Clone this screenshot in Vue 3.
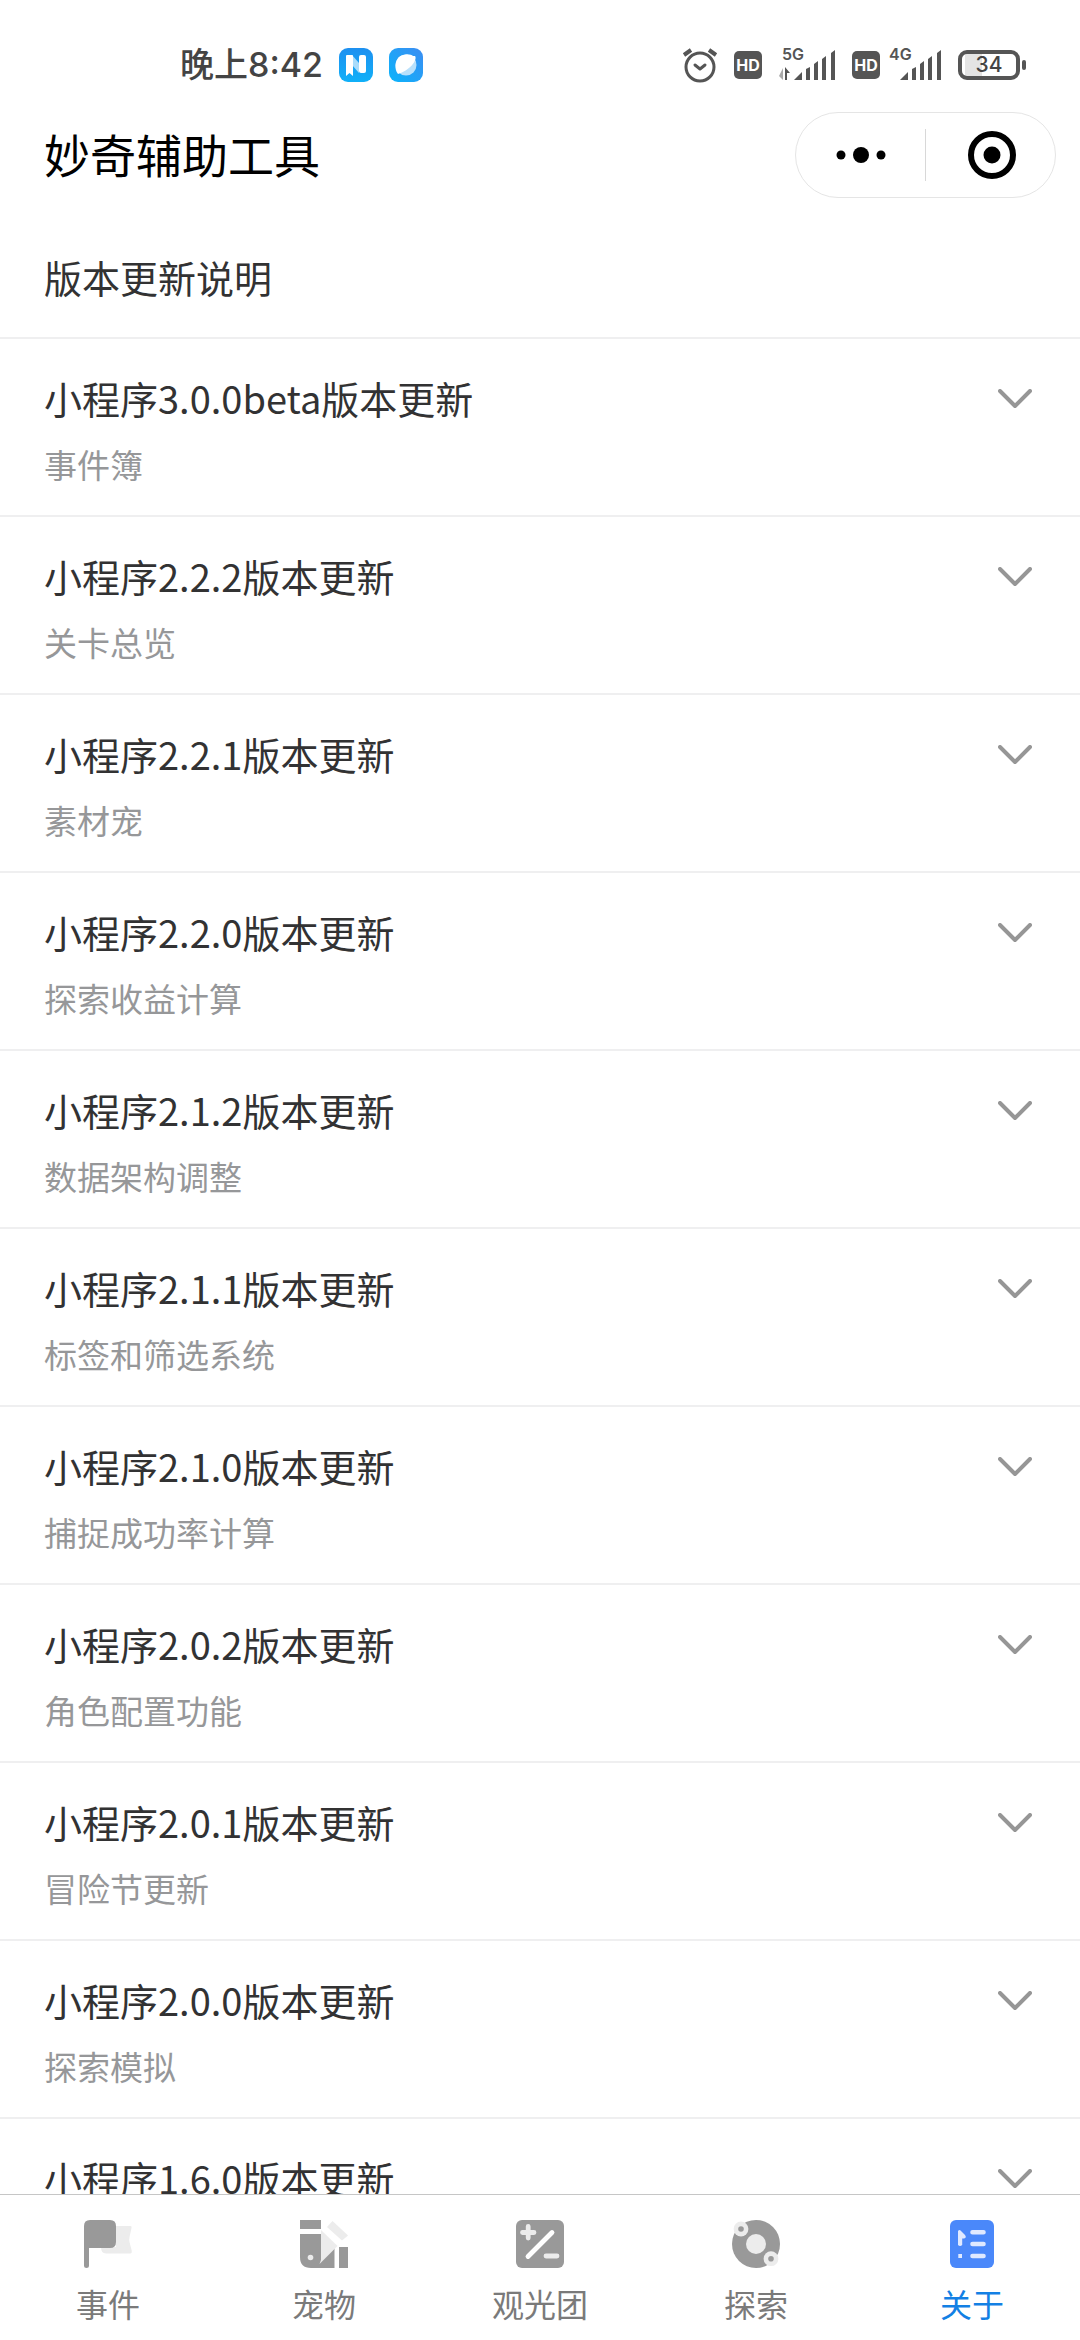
<script setup>
import { ref } from 'vue'

const updates = [
  { version: '3.0.0beta', note: '事件簿' },
  { version: '2.2.2', note: '关卡总览' },
  { version: '2.2.1', note: '素材宠' },
  { version: '2.2.0', note: '探索收益计算' },
  { version: '2.1.2', note: '数据架构调整' },
  { version: '2.1.1', note: '标签和筛选系统' },
  { version: '2.1.0', note: '捕捉成功率计算' },
  { version: '2.0.2', note: '角色配置功能' },
  { version: '2.0.1', note: '冒险节更新' },
  { version: '2.0.0', note: '探索模拟' },
  { version: '1.6.0', note: '' },
]

const tabs = [
  { id: 'event', label: '事件' },
  { id: 'pet', label: '宠物' },
  { id: 'tour', label: '观光团' },
  { id: 'explore', label: '探索' },
  { id: 'about', label: '关于' },
]

const active = ref('about')
</script>

<template>
  <div class="page">
    <div class="status">
      <div class="status-left">
        <span class="time">晚上8:42</span>
        <svg class="app-icon" viewBox="0 0 34 34" aria-hidden="true">
          <defs>
            <linearGradient id="gn" x1="0" y1="0" x2="0" y2="1">
              <stop offset="0" stop-color="#1e90f0" /><stop offset="1" stop-color="#10b0f8" />
            </linearGradient>
          </defs>
          <rect width="34" height="34" rx="9" fill="url(#gn)" />
          <path d="M13 7L20 15V25L13 17Z" fill="#a9dcfb" />
          <path d="M7 8Q7 7 8 7H13Q14 7 14 8V28L10.500 25L7 28Z" fill="#fff" />
          <rect x="20" y="7" width="7" height="18" rx="2" fill="#fff" />
        </svg>
        <svg class="app-icon" viewBox="0 0 34 34" aria-hidden="true">
          <defs>
            <linearGradient id="gb" x1="1" y1="0" x2="0" y2="1">
              <stop offset="0" stop-color="#3d8df2" /><stop offset="1" stop-color="#0ab4fb" />
            </linearGradient>
          </defs>
          <rect width="34" height="34" rx="9" fill="url(#gb)" />
          <circle cx="17" cy="17" r="10.500" fill="#b9e0fb" />
          <path d="M26 8C29 12 20 23 9 26C5 21 6 13 10 9C15 5 22 6 24 8Z" fill="#fff" />
        </svg>
      </div>
      <div class="status-right">
        <svg class="alarm" viewBox="0 0 36 36" fill="none" stroke="#555" stroke-width="3" stroke-linecap="round" aria-hidden="true">
          <circle cx="18" cy="20" r="14" />
          <path d="M13 18L18 22L23 18" stroke-linejoin="round" />
          <path d="M2 8L9 3M27 3L34 8" stroke-width="4" stroke-linecap="butt" />
        </svg>
        <span class="hd">HD</span>
        <svg class="signal wide" viewBox="0 -6 58 46" fill="#555" aria-label="5G">
          <text x="4" y="12" class="net">5G</text>
          <path d="M5 20V32L1 28M5 32H4Z" fill="#aaa" />
          <path d="M9 32H7V19L12 25H9Z" />
          <path d="M16 32L24 24V32Z" />
          <path d="M28 21L32 19V32H28ZM36 16L40 13V32H36ZM44 11L48 8V32H44ZM53 5L57 2V32H53Z" />
        </svg>
        <span class="hd">HD</span>
        <svg class="signal" viewBox="0 -6 54 46" fill="#555" aria-label="4G">
          <text x="1" y="12" class="net">4G</text>
          <path d="M12 32L20 24V32Z" />
          <path d="M24 21L28 19V32H24ZM32 16L36 13V32H32ZM40 11L44 8V32H40ZM49 5L53 2V32H49Z" />
        </svg>
        <div class="battery">
          <span class="cell">34</span>
          <span class="pole"></span>
        </div>
      </div>
    </div>

    <header class="nav">
      <h1>妙奇辅助工具</h1>
      <div class="capsule">
        <button type="button" aria-label="更多">
          <svg width="52" height="52" viewBox="0 0 52 52">
            <circle cx="6" cy="26" r="4.500" /><circle cx="26" cy="26" r="8" /><circle cx="46" cy="26" r="4.500" />
          </svg>
        </button>
        <i class="divider"></i>
        <button type="button" aria-label="关闭">
          <svg width="52" height="52" viewBox="0 0 52 52">
            <circle cx="27" cy="26" r="21" fill="none" stroke="#000" stroke-width="6" />
            <circle cx="27" cy="26" r="8.500" />
          </svg>
        </button>
      </div>
    </header>

    <main class="content">
      <h2>版本更新说明</h2>
      <ul>
        <li v-for="u in updates" :key="u.version">
          <button type="button" class="row" aria-expanded="false">
            <span class="text">
              <span class="title">小程序{{ u.version }}版本更新</span>
              <span class="note">{{ u.note }}</span>
            </span>
            <svg class="chevron" viewBox="0 0 34 20" fill="none" stroke="#969696" stroke-width="4" stroke-linecap="round" stroke-linejoin="round" aria-hidden="true">
              <path d="M2 2L17 17L32 2" />
            </svg>
          </button>
        </li>
      </ul>
    </main>

    <nav class="tabs">
      <button
        v-for="t in tabs"
        :key="t.id"
        type="button"
        :class="{ active: active === t.id }"
        @click="active = t.id"
      >
        <svg class="tab-icon" viewBox="0 0 48 48" fill="#999" aria-hidden="true">
          <g v-if="t.id === 'event'">
            <path d="M17 27H32V6H46.500Q48 6 47.500 8L45.500 17Q45 19.500 45.500 22L47.800 31Q48 33.500 46.500 33.500H22Q17 33.500 17 27Z" fill="#ececec" />
            <path d="M6 0H26Q32 0 32 6V22Q32 28 26 28H5V46Q5 48 2.500 48Q0 48 0 46V6Q0 0 6 0Z" />
          </g>
          <g v-else-if="t.id === 'pet'">
            <path d="M0 0H21V9H0ZM0 14H21V41L34.500 28V48H11Q0 48 0 37ZM39 27H48V48H39Z" />
            <path d="M21 10L37.500 26L19.500 44L21 40ZM32.500 1L48 15.500L42 20.500L27 7Z" fill="#ececec" />
            <circle cx="10.500" cy="37.500" r="2.800" fill="#ececec" />
          </g>
          <g v-else-if="t.id === 'tour'" fill="none" stroke-width="4.800" stroke-linecap="round">
            <rect width="48" height="48" rx="6" fill="#999" />
            <path d="M6.500 12.500H18M12.200 6.500V18M30 36H41" stroke="#ececec" />
            <path d="M12 36.500L36 12.500" stroke="#fff" />
          </g>
          <g v-else-if="t.id === 'explore'">
            <circle cx="24" cy="24" r="24" />
            <g fill="#ececec">
              <circle cx="24" cy="24" r="10" /><circle cx="9" cy="9" r="7.400" /><circle cx="39" cy="38.700" r="7.400" />
            </g>
            <circle cx="9" cy="9" r="2.800" /><circle cx="39" cy="38.700" r="2.800" />
          </g>
          <g v-else>
            <rect x="2" width="44" height="48" rx="6" fill="#4a88fa" />
            <path d="M24.500 12.200H35.500M24.500 24H35.500M24.500 36H35.500" stroke="#dfe9ff" stroke-width="4.600" stroke-linecap="round" />
            <path d="M10 11Q11.500 9 13 11L17 15Q19 17.500 16 18.500H14.200V25Q12 27 10 25ZM10.300 34H14V38H10.300Z" fill="#dfe9ff" />
          </g>
        </svg>
        <span>{{ t.label }}</span>
      </button>
    </nav>
  </div>
</template>

<style>
body {
  background: #fff;
}
</style>

<style scoped>
.page {
  display: flex;
  flex-direction: column;
  height: 100vh;
  overflow: hidden;
  background: #fff;
  color: #323233;
  font-family: "Noto Sans CJK SC", sans-serif;
}
button {
  margin: 0;
  padding: 0;
  border: 0;
  background: none;
  color: inherit;
  font: inherit;
}
svg {
  display: block;
  flex: none;
}
h1,
h2,
ul {
  margin: 0;
  padding: 0;
  font-weight: 400;
  list-style: none;
}
.status {
  display: flex;
  flex: none;
  align-items: center;
  justify-content: space-between;
  height: 70px;
  padding: 30px 54px 0 180px;
}
.status-left,
.status-right {
  display: flex;
  align-items: center;
  gap: 16px;
}
.time {
  color: #444;
  font: 500 34px/40px Inter, "Noto Sans CJK SC", sans-serif;
}
.app-icon {
  width: 34px;
  height: 34px;
}
.alarm {
  width: 36px;
  height: 36px;
}
.hd {
  width: 28px;
  height: 28px;
  border-radius: 5px;
  background: #555;
  color: #fff;
  font: 700 16px/28px Inter, sans-serif;
  text-align: center;
}
.signal {
  width: 54px;
  height: 46px;
  margin-left: -8px;
}
.signal.wide {
  width: 58px;
  margin-left: 0;
}
.net {
  font: 600 16px Inter, sans-serif;
}
.battery {
  display: flex;
  align-items: center;
  gap: 2px;
}
.cell {
  box-sizing: border-box;
  width: 62px;
  height: 30px;
  border: 4px solid #555;
  border-radius: 9px;
  background: linear-gradient(to right, #fff 3px, #e4e4e4 3px, #e4e4e4 20px, #fff 20px);
  color: #444;
  font: 500 21px/22px Inter, sans-serif;
  text-align: center;
}
.pole {
  width: 4px;
  height: 10px;
  border-radius: 2px;
  background: #555;
}
.nav {
  display: flex;
  flex: none;
  align-items: center;
  justify-content: space-between;
  height: 110px;
  padding: 0 24px 0 44px;
}
h1 {
  padding-bottom: 4px;
  color: #000;
  font-size: 46px;
  line-height: 64px;
}
.capsule {
  display: flex;
  align-items: center;
  box-sizing: border-box;
  width: 261px;
  height: 86px;
  border: 1px solid #e5e5e5;
  border-radius: 43px;
}
.capsule button {
  display: flex;
  flex: 1;
  align-items: center;
  justify-content: center;
}
.divider {
  width: 1px;
  height: 52px;
  background: #d8d8d8;
}
.content {
  flex: 1;
  min-height: 0;
  overflow: hidden;
}
h2 {
  padding: 40px 44px 33px;
  border-bottom: 2px solid #efeff0;
  font-size: 38px;
  line-height: 54px;
}
.row {
  display: flex;
  align-items: flex-start;
  justify-content: space-between;
  box-sizing: border-box;
  width: 100%;
  height: 178px;
  padding: 32px 48px 0 44px;
  border-bottom: 2px solid #efeff0;
  text-align: left;
}
.text {
  display: flex;
  flex-direction: column;
  gap: 17px;
}
.title {
  font-size: 38px;
  line-height: 54px;
}
.note {
  color: #969799;
  font-size: 33px;
  line-height: 44px;
}
.chevron {
  width: 34px;
  height: 20px;
  margin-top: 18px;
}
.tabs {
  display: flex;
  flex: none;
  border-top: 1px solid #c6c6c6;
  background: #fff;
}
.tabs button {
  display: flex;
  flex: 1;
  flex-direction: column;
  align-items: center;
  gap: 12px;
  padding: 25px 0 14px;
  color: #7a7a7a;
  font-size: 32px;
  line-height: 46px;
}
.tabs .active {
  color: #1380e4;
}
.tab-icon {
  width: 48px;
  height: 48px;
}
</style>
